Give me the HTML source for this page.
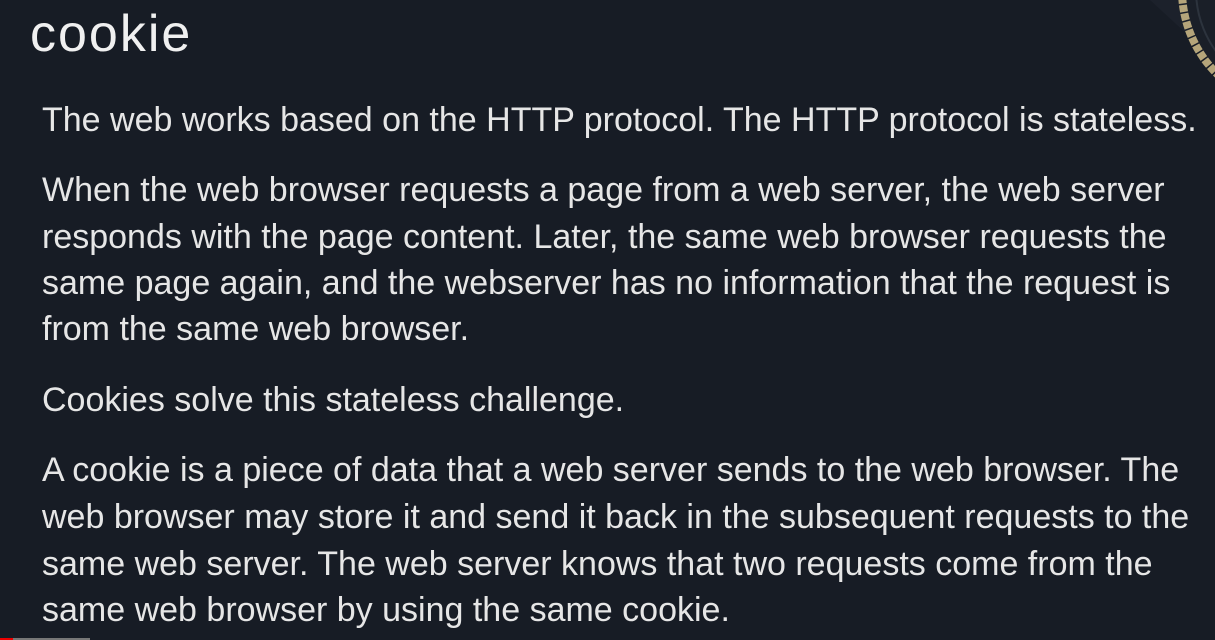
<!DOCTYPE html>
<html><head><meta charset="utf-8"><style>
html,body{margin:0;padding:0}
body{width:1215px;height:640px;background:#171c25;position:relative;overflow:hidden;font-family:"Liberation Sans",sans-serif;color:#e6e6e6}
.t{position:absolute;left:30px;top:2px;font-size:52px;color:#f0f0f0;line-height:64px;letter-spacing:2px}
.l{position:absolute;left:42px;font-size:34px;white-space:nowrap;line-height:34px}
.bar{position:absolute;left:0;bottom:0;height:2px;width:90px;background:#777}
.bar i{position:absolute;left:0;top:0;height:2px;width:13px;background:#e00}
</style></head><body>
<svg style="position:absolute;left:1100px;top:0" width="115" height="90">
<polygon points="50,0 115,0 115,60" fill="#1c212b"/>
<circle cx="200" cy="-10" r="118" fill="#1a1f28" stroke="#b5a57a" stroke-width="8" stroke-dasharray="7 1.5"/>
<circle cx="200" cy="-10" r="104" fill="none" stroke="#2c333d" stroke-width="2"/>
</svg>
<div class="t">cookie</div>
<div class="l" style="top:103px">The web works based on the HTTP protocol. The HTTP protocol is stateless.</div>
<div class="l" style="top:173px">When the web browser requests a page from a web server, the web server</div>
<div class="l" style="top:220px">responds with the page content. Later, the same web browser requests the</div>
<div class="l" style="top:266px">same page again, and the webserver has no information that the request is</div>
<div class="l" style="top:312px">from the same web browser.</div>
<div class="l" style="top:383px">Cookies solve this stateless challenge.</div>
<div class="l" style="top:453px">A cookie is a piece of data that a web server sends to the web browser. The</div>
<div class="l" style="top:500px">web browser may store it and send it back in the subsequent requests to the</div>
<div class="l" style="top:547px">same web server. The web server knows that two requests come from the</div>
<div class="l" style="top:593px">same web browser by using the same cookie.</div>
<div class="bar"><i></i></div>
</body></html>
